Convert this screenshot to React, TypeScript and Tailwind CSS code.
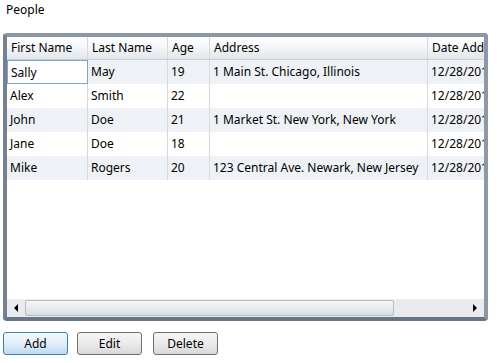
const columns = [
  { title: "First Name", w: "w-[81px]" },
  { title: "Last Name", w: "w-[80px]" },
  { title: "Age", w: "w-[42px]" },
  { title: "Address", w: "w-[218px]" },
  { title: "Date Added", w: "w-[90px]" },
];

const people = [
  ["Sally", "May", "19", "1 Main St. Chicago, Illinois", "12/28/2010"],
  ["Alex", "Smith", "22", "", "12/28/2010"],
  ["John", "Doe", "21", "1 Market St. New York, New York", "12/28/2010"],
  ["Jane", "Doe", "18", "", "12/28/2010"],
  ["Mike", "Rogers", "20", "123 Central Ave. Newark, New Jersey", "12/28/2010"],
];

function Button({ label, primary }: { label: string; primary?: boolean }) {
  return (
    <button
      className={
        "h-[23px] w-[65px] rounded-[3px] border text-[12px] text-black " +
        (primary
          ? "border-[#3c7fb1] bg-gradient-to-b from-[#f4f9fd] via-[#e2eef9] to-[#bcd9f1]"
          : "border-[#707070] bg-gradient-to-b from-[#f6f6f6] via-[#ebebeb] to-[#d8d8d8]")
      }
    >
      {label}
    </button>
  );
}

export default function App() {
  return (
    <div className="h-[363px] w-[497px] overflow-hidden bg-white font-['Noto_Sans',sans-serif] text-[12px] text-black">
      <div className="pl-[6px] pt-[1px] leading-[18px]">People</div>

      <div className="ml-[3px] mt-[14px] flex h-[288px] w-[485px] flex-col overflow-hidden rounded-[4px] border-4 border-[#8b98a5] border-b-[#677585] border-l-[#738191]">
        <div className="flex-1 overflow-hidden">
          {/* header */}
          <div className="flex h-[23px] border-b border-[#c9d0d6] bg-gradient-to-b from-white via-[#f3f5f7] to-[#e2e6ea]">
            {columns.map((c) => (
              <div
                key={c.title}
                className={c.w + " shrink-0 whitespace-nowrap border-r border-[#d5dadf] pl-[4px] leading-[22px]"}
              >
                {c.title}
              </div>
            ))}
          </div>
          {/* rows */}
          {people.map((p, i) => (
            <div key={i} className={"flex h-[24px] " + (i % 2 === 0 ? "bg-[#eef2f7]" : "bg-white")}>
              {p.map((v, j) => (
                <div
                  key={j}
                  className={
                    columns[j].w +
                    " shrink-0 overflow-hidden whitespace-nowrap pl-[3px] leading-[23px] " +
                    (i === 0 && j === 0
                      ? "border border-[#7da2ce] bg-white pl-[2px] leading-[21px]"
                      : "border-r border-[#d5dadf]")
                  }
                >
                  {v}
                </div>
              ))}
            </div>
          ))}
        </div>

        {/* horizontal scrollbar */}
        <div className="flex h-[18px] items-center bg-[#e9ebee] px-[1px]">
          <div className="flex w-[16px] items-center justify-center">
            <div className="h-0 w-0 border-y-[4px] border-r-[4px] border-y-transparent border-r-black" />
          </div>
          <div className="ml-[1px] h-[16px] w-[369px] rounded-[2px] border border-[#b7bcc1] bg-gradient-to-b from-[#f5f6f7] via-[#e8ebee] to-[#d9dde2]" />
          <div className="flex-1" />
          <div className="flex w-[16px] items-center justify-center">
            <div className="h-0 w-0 border-y-[4px] border-l-[4px] border-y-transparent border-l-black" />
          </div>
        </div>
      </div>

      <div className="ml-[3px] mt-[11px] flex gap-[9px]">
        <Button label="Add" primary />
        <Button label="Edit" />
        <div className="ml-[2px]">
          <Button label="Delete" />
        </div>
      </div>
    </div>
  );
}
